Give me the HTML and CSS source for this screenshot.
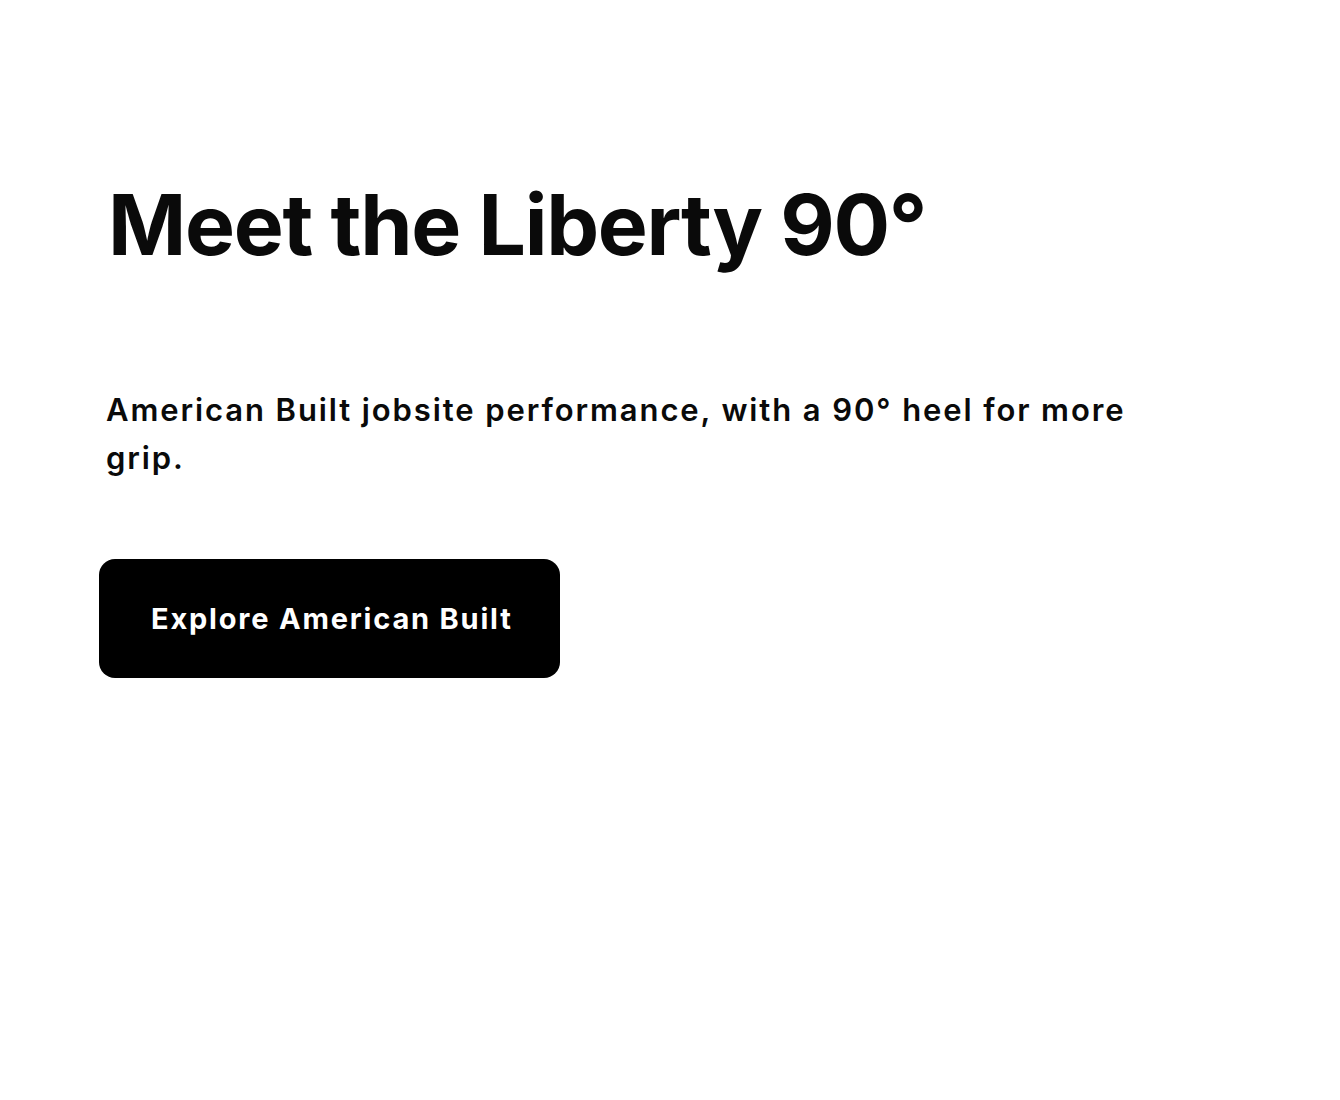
FILE: index.html
```html
<!DOCTYPE html>
<html lang="en">
<head>
<meta charset="utf-8">
<title>Meet the Liberty 90°</title>
<link rel="stylesheet" href="styles.css">
</head>
<body>
<section class="hero">
  <h1 class="title">Meet the Liberty 90°</h1>
  <p class="lede">American Built jobsite performance, with a 90° heel for more grip.</p>
  <a class="cta" href="#">Explore American Built</a>
</section>
</body>
</html>
```

FILE: styles.css
```css
html, body {
  margin: 0;
  padding: 0;
  background: #ffffff;
}
body {
  font-family: "Inter", "Liberation Sans", sans-serif;
  color: #0a0a0a;
}
.hero {
  display: flex;
  flex-direction: column;
  align-items: flex-start;
  padding: 170px 0 0 106px;
}
.title {
  margin: 0 0 0 2px;
  font-size: 84px;
  line-height: 110px;
  font-weight: 700;
  letter-spacing: -1.3px;
}
.lede {
  margin: 106px 0 0 0;
  width: 1080px;
  font-size: 31px;
  line-height: 48px;
  font-weight: 600;
  letter-spacing: 1.9px;
}
.cta {
  margin: 77px 0 0 -7px;
  display: flex;
  align-items: center;
  box-sizing: border-box;
  width: 461px;
  height: 119px;
  padding-left: 52px;
  background: #000;
  color: #fff;
  border-radius: 16px;
  text-decoration: none;
  font-size: 29px;
  font-weight: 700;
  letter-spacing: 1.8px;
}
```
